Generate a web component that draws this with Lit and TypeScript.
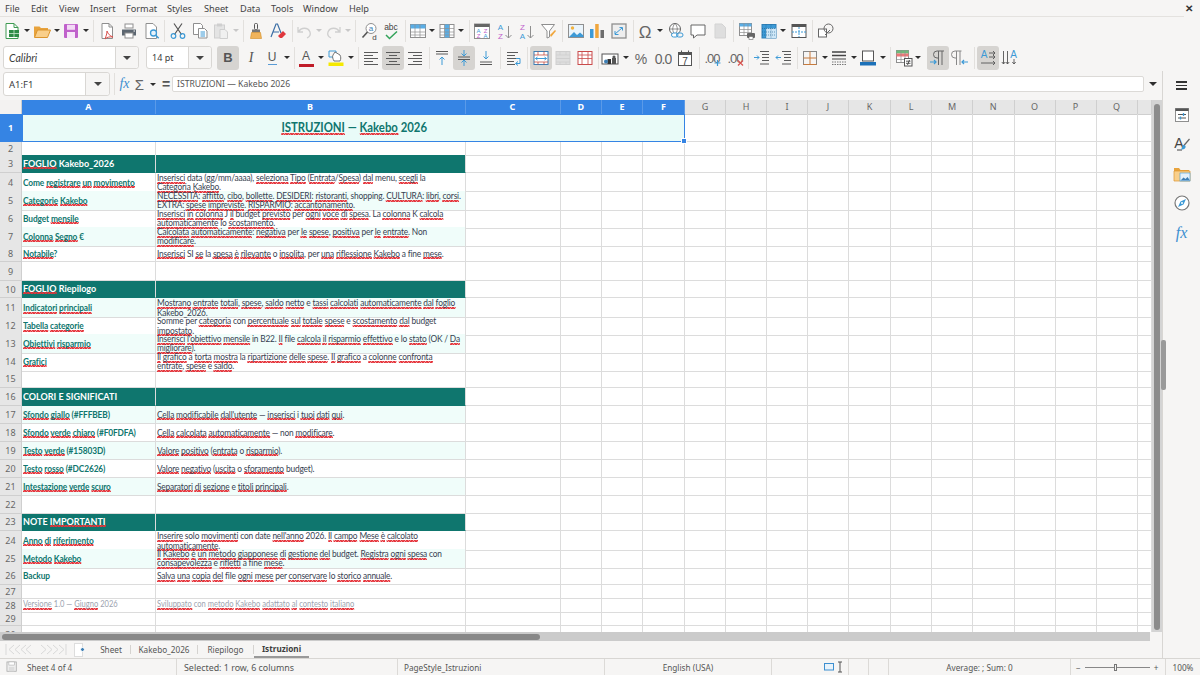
import { LitElement, html, svg, css } from "lit";
import { customElement } from "lit/decorators.js";

const B = "#5a5a5a", BL = "#3d9ad6", G = "#8f8f8f", LG = "#cfcfcf";

const ic: Record<string, any> = {
  new: svg`<path d="M3 1.5h8l4 4v11H3z" fill="#fff" stroke="#3e9a52"/><path d="M11 1.5v4h4" fill="none" stroke="#3e9a52"/><rect x="6" y="8" width="10" height="7" fill="#2e8b47"/><path d="M6 11.5h10M11 8v7" stroke="#c9e8cf" stroke-width=".8"/>`,
  open: svg`<path d="M1 4.5V15h2L5 8h10V6H8L6.5 4.5z" fill="#e8a33d"/><path d="M1.5 15.5 4.5 8H17.5l-3 7.5z" fill="#f9cf8b" stroke="#dc952e"/>`,
  save: svg`<rect x="2" y="2" width="14" height="14" rx="1" fill="#c061cb"/><rect x="5" y="2.800" width="8" height="5" fill="#f2daf5"/><rect x="5" y="10" width="8" height="6" fill="#f7e6f9"/>`,
  pdf: svg`<path d="M4 1.5h7l3.5 3.5v11.500H4z" fill="#fff" stroke=${G}/><path d="M11 1.5V5h3.5" fill="none" stroke=${G}/><path d="M9 9c1 3 3 5 6 6-3-.5-6 0-8 2 1-3 2-5 2-8z" fill="none" stroke="#d9534f"/>`,
  print: svg`<rect x="5" y="2" width="8" height="4" fill="#fff" stroke=${G}/><path d="M2 7.500h14v6H2z" fill="#5c6670"/><rect x="5" y="11" width="8" height="5" fill="#fff" stroke=${G}/><path d="M13.500 9h1.500" stroke="#fff"/>`,
  preview: svg`<path d="M3 1.500h7l3.500 3.500v11.500H3z" fill="#fff" stroke=${G}/><circle cx="10.500" cy="11" r="3" fill="#e8f3fb" stroke=${BL} stroke-width="1.300"/><path d="m12.700 13.200 3 3" stroke=${BL} stroke-width="1.500"/>`,
  cut: svg`<path d="M5 1.500l7.500 11M13 1.500 5.500 12.500" stroke="#555" stroke-width="1.200" fill="none"/><circle cx="4.500" cy="14" r="2.300" fill="none" stroke=${BL} stroke-width="1.200"/><circle cx="13.500" cy="14" r="2.300" fill="none" stroke=${BL} stroke-width="1.200"/>`,
  copy: svg`<path d="M2.500 1.500h7l2 2v9h-9z" fill="#fff" stroke=${G}/><path d="M7.500 6.500h6l2.500 2.500v7H7.500z" fill="#fff" stroke=${G}/><path d="M9.500 10h4.500M9.500 12h4.500M9.500 14h4.500" stroke=${BL}/>`,
  paste: svg`<rect x="2.500" y="3" width="10" height="13" fill="#e4e4e4" stroke=${LG}/><rect x="5" y="1.500" width="5" height="3" fill=${LG}/><path d="M8 7.500h5l2.500 2.500v6.500H8z" fill="#f0f0f0" stroke=${LG}/>`,
  clone: svg`<rect x="7.500" y="1.500" width="3" height="6" rx="1" fill="none" stroke="#555"/><path d="M5 7.500h8v3H5z" fill="#777"/><path d="M4.500 10.500h9l1 6h-11z" fill="#f0b45c" stroke="#d18b22" stroke-width=".6"/>`,
  clear: svg`<path d="M2 15 7 2h1.500L12 11M4 10h6" fill="none" stroke="#3b6ea5" stroke-width="1.200"/><path d="m9 14 5-5 3 3-4 4h-2z" fill="#e0383e"/>`,
  undo: svg`<path d="M3 5v5h5M3.500 10C6 5 13 5 15 10c1 3-1 5-3 6" fill="none" stroke=${LG} stroke-width="1.300"/>`,
  redo: svg`<path d="M15 5v5h-5M14.500 10C12 5 5 5 3 10c-1 3 1 5 3 6" fill="none" stroke=${LG} stroke-width="1.300"/>`,
  find: svg`<circle cx="10" cy="6.500" r="5" fill="#fff" stroke=${G}/><path d="M6.500 10 1.500 15.500" stroke="#555" stroke-width="1.600"/><text x="10" y="9" class="t" font-size="8" text-anchor="middle" fill="#3d7fb5">a</text><text x="13.500" y="17.500" class="t" font-size="8" text-anchor="middle" fill="#444">d</text>`,
  spell: svg`<text x="9" y="8" class="t" font-size="8.500" text-anchor="middle" fill="#444">abc</text><path d="m4 13 3.500 3.500L15 9.500" fill="none" stroke="#33a35a" stroke-width="1.500"/>`,
  rows: svg`<rect x="1.500" y="2.500" width="15" height="13" fill="#fff" stroke=${G}/><rect x="1.500" y="2.500" width="15" height="4" fill="#5aaee6"/><path d="M1.500 10h15M1.500 13h15M6 2.500v13M11 2.500v13" stroke=${G} stroke-width=".7"/>`,
  cols: svg`<rect x="2" y="2.500" width="14" height="13" fill="#fff" stroke=${G}/><rect x="6.500" y="2.500" width="5" height="13" fill="#5aaee6"/><path d="M2 6.500h14M2 10h14M2 13h14M6.500 2.500v13M11.500 2.500v13" stroke=${G} stroke-width=".7"/>`,
  sortbox: svg`<rect x="1.500" y="2" width="15" height="14.500" fill="#fff" stroke=${G}/><rect x="1.500" y="2" width="15" height="3" fill="#666"/><text x="5.500" y="10.500" class="t" font-size="6" text-anchor="middle" fill=${BL}>A</text><text x="5.500" y="16" class="t" font-size="6" text-anchor="middle" fill="#c061cb">Z</text><text x="12.500" y="10.500" class="t" font-size="6" text-anchor="middle" fill="#c061cb">Z</text><text x="12.500" y="16" class="t" font-size="6" text-anchor="middle" fill=${BL}>A</text>`,
  asc: svg`<text x="4.500" y="8" class="t" font-size="8" text-anchor="middle" fill=${BL}>A</text><text x="4.500" y="16.500" class="t" font-size="8" text-anchor="middle" fill="#c061cb">Z</text><path d="M12.500 4v12M9.500 13l3 3 3-3" fill="none" stroke=${G}/>`,
  desc: svg`<text x="4.500" y="8" class="t" font-size="8" text-anchor="middle" fill="#c061cb">Z</text><text x="4.500" y="16.500" class="t" font-size="8" text-anchor="middle" fill=${BL}>A</text><path d="M12.500 4v12M9.500 13l3 3 3-3" fill="none" stroke=${G}/>`,
  filter: svg`<path d="M1.500 2.500h13L9.500 9v6L7 16V9z" fill="#fff" stroke=${G}/><path d="M11 15l5-6-1-1-5 5z" fill="#f0a63c"/>`,
  image: svg`<rect x="1.500" y="2.500" width="15" height="13" fill="#eaf4fb" stroke=${G}/><circle cx="5.500" cy="6" r="1.700" fill="#f2b23e"/><path d="M2 15l5-5 3 3 3-2.500 3.500 3V15z" fill="#3d9ad6"/>`,
  chart: svg`<rect x="2" y="7" width="3.500" height="9" fill="#3d9ad6"/><rect x="7.200" y="2" width="3.500" height="14" fill="#f0a63c"/><rect x="12.500" y="8" width="3.500" height="8" fill="#6d6d6d"/>`,
  pivot: svg`<rect x="2" y="2" width="14" height="14" fill="#eee" stroke=${G} stroke-width="1.300"/><path d="M5 12 12 6M9.500 5.500H12.500V8.500M5 9v3.500h3.500" fill="none" stroke=${BL}/>`,
  omega: svg`<text x="9" y="15.500" class="t" font-size="17" text-anchor="middle" fill="#666">Ω</text>`,
  link: svg`<circle cx="8" cy="7" r="5.500" fill="#fff" stroke="#666"/><path d="M2.500 7h11M8 1.500c-3 3-3 8 0 11 3-3 3-8 0-11" fill="none" stroke="#666" stroke-width=".7"/><rect x="4.500" y="11" width="6.500" height="4" rx="2" fill="#fff" stroke=${BL}/><rect x="9.500" y="11" width="6.500" height="4" rx="2" fill="none" stroke=${BL}/>`,
  comment: svg`<path d="M2 3h14v10H8l-3.500 3v-3H2z" fill="#fff" stroke="#666"/>`,
  header: svg`<path d="M4 2h7l3.500 3.500V16H4z" fill="#dedede" stroke="#d3d3d3"/>`,
  printarea: svg`<rect x="1.500" y="1.500" width="12" height="12" fill="#fff" stroke=${G}/><rect x="1.500" y="1.500" width="12" height="3" fill="#5aaee6"/><path d="M1.500 7.500h12M1.500 10.500h12M6 1.500v12M10 1.500v12" stroke=${G} stroke-width=".7"/><rect x="9" y="11" width="8" height="5" rx="1" fill="#666"/><rect x="11" y="14.500" width="4" height="3" fill="#fff" stroke="#666" stroke-width=".6"/>`,
  freeze: svg`<rect x="2" y="2.500" width="14" height="13.500" fill="#3d9ad6" stroke="#2f7fb5"/><rect x="6" y="6.500" width="10" height="9.500" fill="#cfe7f7"/><path d="M2 6.500h14M2 10h14M2 13h14M6 2.500V16M11 2.500V16" stroke="#1d5f8f" stroke-width=".6" stroke-dasharray="1 1"/>`,
  split: svg`<rect x="2" y="2.500" width="14" height="13" fill="#fff" stroke="#555"/><rect x="2" y="2.500" width="14" height="2.500" fill="#555"/><path d="M2 10h14M9 5v10" stroke=${BL} stroke-dasharray="2 1"/>`,
  shapes: svg`<rect x="1.500" y="7" width="8" height="8" fill="#fff" stroke="#666"/><circle cx="11.500" cy="6.500" r="4.500" fill="none" stroke="#666"/><path d="M8 13l5-5" stroke="#666"/>`,
  left: svg`<path d="M2 3.500h14M2 6.500h9M2 9.500h14M2 12.500h9M2 15.500h14" stroke=${B} fill="none"/>`,
  center: svg`<path d="M2 3.500h14M5 6.500h8M2 9.500h14M5 12.500h8M2 15.500h14" stroke=${B} fill="none"/>`,
  right: svg`<path d="M2 3.500h14M7 6.500h9M2 9.500h14M7 12.500h9M2 15.500h14" stroke=${B} fill="none"/>`,
  top: svg`<path d="M3 2.500h12M3 5h12" stroke=${B}/><path d="M9 16V8M6.500 10.500 9 8l2.500 2.500" fill="none" stroke=${BL}/>`,
  vcenter: svg`<path d="M3 8h12M3 10.500h12" stroke=${B}/><path d="M9 1v5.500M6.500 4.500 9 7l2.500-2.500M9 17v-5.500M6.500 13.500 9 11l2.500 2.500" fill="none" stroke=${BL}/>`,
  bottom: svg`<path d="M3 13h12M3 15.500h12" stroke=${B}/><path d="M9 2v8M6.500 7.500 9 10l2.500-2.500" fill="none" stroke=${BL}/>`,
  wrap: svg`<path d="M2 3.500h11M2 6.500h8M2 9.500h9M2 12.500h7M2 15.500h8" stroke=${B}/><path d="M11 9.500h4v5h-4M13 12.500l-2.500 2 2.500 2" fill="none" stroke=${BL}/>`,
  merge: svg`<rect x="2" y="2.500" width="14" height="13" fill="#fff" stroke="#3d7fb5"/><path d="M2 6h14M2 13h14M6 2.500V6M12 2.500V6M6 13v2.500M12 13v2.500" stroke="#c0392b" stroke-width=".7"/><path d="M3.500 9.500h11M5.500 8l-2 1.500 2 1.500M12.500 8l2 1.500-2 1.500" fill="none" stroke=${BL}/>`,
  merge2: svg`<rect x="2" y="2.500" width="14" height="13" fill="#dedede" stroke=${LG}/><path d="M2 6h14M2 13h14M6 2.500V6M12 2.500V6M6 13v2.500M12 13v2.500" stroke=${LG} stroke-width=".7"/><path d="M2 9.500h14" stroke=${LG}/>`,
  merge3: svg`<rect x="2" y="2.500" width="14" height="13" fill="#fff" stroke="#c94b4b"/><path d="M2 6h14M2 9.500h14M6 2.500V15.500M12 2.500V15.500" stroke="#c94b4b" stroke-width=".8"/>`,
  currency: svg`<rect x="1" y="5" width="16" height="10" fill="#fff" stroke="#555"/><rect x="6.500" y="10" width="3.500" height="5" fill="#333"/><rect x="11" y="9" width="4" height="6" fill="#555"/><circle cx="13" cy="8" r="1.600" fill="#555"/><circle cx="5" cy="12.500" r="2" fill="#3d7fb5"/>`,
  percent: svg`<text x="9" y="15" class="t" font-size="14" text-anchor="middle" fill="#666">%</text>`,
  zero: svg`<text x="9" y="15" class="t" font-size="14" text-anchor="middle" fill="#666" letter-spacing="-1">0.0</text>`,
  date: svg`<rect x="2.500" y="3.500" width="13" height="13" fill="#fff" stroke="#555"/><path d="M2.500 3.500h13v2h-13zM5.500 1.500v3M12.500 1.500v3" fill="#555" stroke="#555"/><text x="9" y="15.500" class="t" font-size="10" text-anchor="middle" fill="#444">7</text>`,
  addec: svg`<text x="9" y="14" class="t" font-size="13" text-anchor="middle" fill="#666" letter-spacing="-1">.00</text><path d="M14.500 11v6M11.500 14h6" stroke=${BL} stroke-width="1.200"/>`,
  deldec: svg`<text x="9" y="14" class="t" font-size="13" text-anchor="middle" fill="#666" letter-spacing="-1">.00</text><path d="m12 11.500 5 5m0-5-5 5" stroke="#d9534f" stroke-width="1.200"/>`,
  indent: svg`<path d="M7 2.500h9M9 5.500h7M9 8.500h7M9 11.500h7M7 15h9" stroke=${B}/><path d="M1 8.500h5M4 6.500l2 2-2 2" fill="none" stroke=${BL}/>`,
  outdent: svg`<path d="M7 2.500h9M9 5.500h7M9 8.500h7M9 11.500h7M7 15h9" stroke=${B}/><path d="M1 8.500h5M3 6.500l-2 2 2 2" fill="none" stroke=${BL}/>`,
  borders: svg`<rect x="2.500" y="2.500" width="13" height="13" fill="none" stroke="#888"/><path d="M9 2.500v13M2.500 9h13" stroke="#c77a3c"/><path d="M2.500 15.500h13" stroke="#c77a3c"/>`,
  linestyle: svg`<path d="M2 3h14M2 6.500h14" stroke="#444" stroke-width="1.500"/><path d="M2 10h14" stroke="#444" stroke-width="1"/><path d="M2 13h14M2 15.500h14" stroke="#777" stroke-dasharray="1.500 1"/>`,
  bordercolor: svg`<rect x="3.500" y="2" width="11" height="10" fill="#fff" stroke="#555"/><rect x="1" y="13" width="16" height="3.500" fill="#1c71b8"/>`,
  cond: svg`<rect x="1.500" y="1.500" width="12" height="12" fill="#fff" stroke=${G}/><rect x="1.500" y="1.500" width="12" height="3" fill="#6dbb7a"/><rect x="1.500" y="4.500" width="12" height="3" fill="#e77"/><path d="M1.500 10.500h12M6 1.500v12M10 1.500v12" stroke=${G} stroke-width=".7"/><rect x="9.500" y="9.500" width="7.500" height="7.500" fill="#fff" stroke="#555"/><path d="M11 12.200h4.500M11 14.300h4.500M14.500 11l-2 5" stroke="#333" stroke-width=".8"/>`,
  ltr: svg`<path d="M9.500 2v14M13 2v14M15 2H8a3.500 3.500 0 0 0 0 7h1.500" fill="none" stroke="#666"/><path d="M1 13h6M5 11l2 2-2 2" fill="none" stroke=${BL} stroke-width="1.200"/>`,
  rtl: svg`<path d="M5.500 2v14M9 2v14M10.500 2H4a3.500 3.500 0 0 0 0 7h1.500" fill="none" stroke="#888"/><path d="M11 13h6M13 11l-2 2 2 2" fill="none" stroke=${BL} stroke-width="1.200"/>`,
  horiz: svg`<text x="5" y="9" class="t" font-size="10" text-anchor="middle" fill=${BL}>A</text><path d="M10 4h6M14 2l2 2-2 2M10 8h6M14 6l2 2-2 2M2 14h14M14 12l2 2-2 2" fill="none" stroke="#555" stroke-width=".9"/>`,
  vert: svg`<text x="12.500" y="9" class="t" font-size="10" text-anchor="middle" fill=${BL}>A</text><path d="M2.500 2v13M.8 13l1.700 2 1.700-2M6.500 2v13M4.800 13l1.700 2 1.700-2M13 10v5M11.300 13l1.700 2 1.700-2" fill="none" stroke="#555" stroke-width=".9"/>`,
  props: svg`<rect x="2.500" y="2.500" width="13" height="13" fill="#fff" stroke=${G}/><rect x="2.500" y="2.500" width="13" height="2.500" fill="#555"/><path d="M5 8.500h8M5 12h8" stroke="#555"/><path d="M10.500 7v3M7.500 10.500v3" stroke=${BL} stroke-width="1.300"/>`,
  styles: svg`<text x="6" y="13" class="t" font-size="14" text-anchor="middle" fill="#444">A</text><path d="M4 15h5" stroke="#444"/><path d="M16.500 4 10.500 11" stroke="#666" stroke-width="1.200"/><path d="M11 10c1 0 2 1 1.500 2.500-1 2-3 2-4.500 2 1-1 1-4.500 3-4.500z" fill=${BL}/>`,
  gallery: svg`<path d="M1 3h5l1.500 2H16v3H1z" fill="#e8a33d"/><path d="M1 6h16v10H1z" fill="#f9cf8b" stroke="#dc952e" stroke-width=".7"/><rect x="7" y="8" width="10" height="8" fill="#e4f0f9" stroke=${BL} stroke-width=".6"/><path d="M7.500 15.500l3-3 2 1.500 2-2 2.500 3.500z" fill="#3d7fb5"/>`,
  nav: svg`<circle cx="9" cy="9" r="7" fill="#fff" stroke="#777" stroke-width="1.200"/><path d="M13 5 10.500 10.500 5 13l2.500-5.500z" fill=${BL}/><circle cx="9" cy="9" r="1" fill="#fff"/>`,
  savedoc: svg`<rect x="2.500" y="2.500" width="12" height="12" fill="#eee" stroke="#aaa"/><rect x="5" y="2.500" width="7" height="4" fill="#fff" stroke="#aaa" stroke-width=".7"/><rect x="5" y="9" width="7" height="5.500" fill="#ddd"/>`,
};

const ICON = (n: string, size = 18) => html`<svg class="i" width=${size} height=${size} viewBox="0 0 18 18">${ic[n]}</svg>`;

type T = [string, number, number?];
const tb1: T[] = [["new",12],["arrow",27],["open",42],["arrow",57],["save",71],["arrow",86],["sep",93],["pdf",107],["print",129],["preview",152],["sep",164],["cut",178],["copy",200],["paste",221],["arrowd",236],["sep",243],["clone",256],["clear",278],["sep",292],["undo",304],["arrowd",319],["redo",334],["arrowd",348],["sep",355],["find",370],["spell",391],["sep",405],["rows",418],["arrow",432],["cols",447],["arrow",461],["sep",469],["sortbox",482],["asc",505],["desc",527],["filter",549],["sep",562],["image",576],["chart",597],["pivot",619],["sep",633],["omega",645],["arrow",660],["link",676],["comment",698],["header",720],["sep",733],["printarea",747],["freeze",769],["arrow",783],["split",799],["sep",812],["shapes",826]];
const tb2: T[] = [["bold",228,1],["italic",251],["under",272],["arrow",287],["sep",294],["fontcolor",306],["arrow",321],["hilite",336],["arrow",351],["sep",358],["left",371],["center",393,1],["right",415],["sep",429],["top",442],["vcenter",464,1],["bottom",486],["sep",500],["wrap",514],["sep",527],["merge",541,1],["merge2",563],["merge3",585],["sep",598],["currency",610],["arrow",626],["percent",641],["zero",663],["date",685],["sep",699],["addec",712],["deldec",735],["sep",748],["indent",762],["outdent",784],["sep",797],["borders",810],["arrow",825],["linestyle",839],["arrow",854],["bordercolor",868],["arrow",883],["sep",890],["cond",904],["arrow",918],["sep",927],["ltr",938,1],["rtl",960],["sep",974],["horiz",988,1],["vert",1010]];

const W = (n: string) => (n === "sep" ? 1 : n.startsWith("arrow") ? 8 : 22);

const colLetters = "A B C D E F G H I J K L M N O P Q".split(" ").concat([""]);
const bottoms = [142,155.3,173,191.2,209.2,227.2,245,262.5,280.7,298.4,316.4,334.3,352.3,370.3,388.3,406,424,442,460,477.7,495.7,513.7,531.4,549.3,567.3,585,598.7,612.3,626.3,644];

type Row = { a?: string; b?: string; kind?: "head" | "tint" | "foot" };
const R: Record<number, Row> = {
  3: { a: "[FOGLIO] Kakebo_2026", kind: "head" },
  4: { a: "Come [registrare] [un] [movimento]", b: "[Inserisci] data (gg/mm/aaaa), [seleziona] [Tipo] ([Entrata]/[Spesa]) [dal] menu, [scegli] la|[Categoria] [Kakebo]." },
  5: { a: "[Categorie] [Kakebo]", kind: "tint", b: "[NECESSITÀ]: [affitto], [cibo], [bollette]. [DESIDERI]: [ristoranti], shopping. [CULTURA]: [libri], [corsi].|EXTRA: [spese] [impreviste]. [RISPARMIO]: [accantonamento]." },
  6: { a: "Budget [mensile]", b: "[Inserisci] [in] [colonna] J [il] budget [previsto] per [ogni] [voce] [di] [spesa]. La [colonna] K [calcola]|[automaticamente] lo [scostamento]." },
  7: { a: "[Colonna] [Segno] €", kind: "tint", b: "[Calcolata] [automaticamente]: [negativa] per [le] [spese], [positiva] per [le] [entrate]. Non|[modificare]." },
  8: { a: "[Notabile]?", b: "[Inserisci] SI [se] la [spesa] [è] [rilevante] o [insolita], per [una] [riflessione] [Kakebo] a fine [mese]." },
  10: { a: "[FOGLIO] Riepilogo", kind: "head" },
  11: { a: "[Indicatori] [principali]", kind: "tint", b: "[Mostrano] [entrate] [totali], [spese], [saldo] [netto] e [tassi] [calcolati] [automaticamente] [dal] [foglio]|Kakebo_2026." },
  12: { a: "[Tabella] [categorie]", b: "Somme per [categoria] con [percentuale] [sul] [totale] [spese] e [scostamento] [dal] budget|[impostato]." },
  13: { a: "[Obiettivi] [risparmio]", kind: "tint", b: "[Inserisci] [l'obiettivo] [mensile] in B22. [Il] file [calcola] [il] [risparmio] [effettivo] e lo [stato] (OK / [Da]|[migliorare])." },
  14: { a: "[Grafici]", b: "[Il] [grafico] a [torta] [mostra] la [ripartizione] [delle] [spese]. [Il] [grafico] a [colonne] [confronta]|[entrate], [spese] e [saldo]." },
  16: { a: "COLORI E SIGNIFICATI", kind: "head" },
  17: { a: "[Sfondo] [giallo] (#FFFBEB)", kind: "tint", b: "[Cella] [modificabile] [dall'utente] — [inserisci] i [tuoi] [dati] [qui]." },
  18: { a: "[Sfondo] [verde] [chiaro] (#F0FDFA)", b: "[Cella] [calcolata] [automaticamente] — non [modificare]." },
  19: { a: "[Testo] [verde] (#15803D)", kind: "tint", b: "[Valore] [positivo] ([entrata] o [risparmio])." },
  20: { a: "[Testo] [rosso] (#DC2626)", b: "[Valore] [negativo] ([uscita] o [sforamento] budget)." },
  21: { a: "[Intestazione] [verde] [scuro]", kind: "tint", b: "[Separatori] [di] [sezione] e [titoli] [principali]." },
  23: { a: "NOTE [IMPORTANTI]", kind: "head" },
  24: { a: "[Anno] [di] [riferimento]", b: "[Inserire] solo [movimenti] con date [nell'anno] 2026. [Il] [campo] [Mese] [è] [calcolato]|[automaticamente]." },
  25: { a: "[Metodo] [Kakebo]", kind: "tint", b: "[Il] [Kakebo] [è] [un] [metodo] [giapponese] [di] [gestione] [del] budget. [Registra] [ogni] [spesa] con|[consapevolezza] e [rifletti] a fine [mese]." },
  26: { a: "Backup", b: "[Salva] [una] [copia] [del] file [ogni] [mese] per [conservare] lo [storico] [annuale]." },
  28: { a: "[Versione] 1.0 — [Giugno] 2026", kind: "foot", b: "[Sviluppato] con [metodo] [Kakebo] [adattato] [al] [contesto] [italiano]" },
};

const rich = (s?: string) => {
  if (!s) return "";
  return s.split("|").map((line) => html`<div class="ln">${line.split(/(\[[^\]]+\])/).map((p) => p.startsWith("[") ? html`<span class="sq">${p.slice(1, -1)}</span>` : p)}</div>`);
};

@customElement("app-root")
export class AppRoot extends LitElement {
  static styles = css`
    :host { display: flex; flex-direction: column; width: 1200px; height: 675px; background: #f6f5f4; overflow: hidden; font-family: "Noto Sans", sans-serif; font-size: 9px; color: #3d3d3d; }
    svg.i { display: block; flex: none; }
    svg .t { font-family: "Liberation Sans", sans-serif; }
    .menu { height: 16px; flex: none; border-bottom: 1px solid #e4e2df; margin-right: 16px; position: relative; font-size: 9.2px; color: #444; }
    .menu span { position: absolute; top: 1px; line-height: 15px; }
    .close { position: absolute; left: 1185px; top: 1px; font-size: 10px; line-height: 15px; font-weight: 700; color: #333; }
    .tb { height: 27px; flex: none; display: flex; align-items: center; }
    .item { height: 24px; display: flex; align-items: center; justify-content: center; flex: none; border-radius: 3px; }
    .item.active { background: #d6d4d1; }
    .sep { width: 1px; height: 22px; background: #e2e0dd; flex: none; }
    .arr { width: 0; height: 0; border-left: 3px solid transparent; border-right: 3px solid transparent; border-top: 3px solid #2e2e2e; }
    .arr.dim { border-top-color: #c8c8c8; }
    .combo { display: flex; height: 23px; background: #fff; border: 1px solid #d9d7d4; border-radius: 3px; flex: none; box-sizing: border-box; align-items: stretch; }
    .combo .val { flex: 1; display: flex; align-items: center; padding-left: 5px; }
    .combo .drop { background: #f6f5f4; border-left: 1px solid #d9d7d4; display: flex; align-items: center; justify-content: center; border-radius: 0 3px 3px 0; }
    .combo .big { border-left-width: 4px; border-right-width: 4px; border-top-width: 4px; border-top-color: #444; }
    .fn { width: 136px; margin-left: 3px; }
    .fn .val { font: italic 10.5px "Lato", sans-serif; }
    .fn .drop { width: 22px; }
    .fs { width: 66px; margin-left: 7px; }
    .fs .drop { width: 22px; }
    .letter { font: 12px "Liberation Sans", sans-serif; color: #555; }
    .letter.b { font-weight: 700; font-size: 13px; }
    .letter.it { font-family: "Liberation Serif", serif; font-style: italic; font-size: 14px; }
    .stack { display: flex; flex-direction: column; align-items: center; line-height: 12px; }
    .bar-u { width: 9px; height: 1px; background: #5a9bd5; }
    .bar-r { width: 15px; height: 3px; background: #c01c28; margin-top: 1px; }
    .body { flex: 1; display: flex; min-height: 0; }
    .left { flex: 1; min-width: 0; display: flex; flex-direction: column; }
    .formula { height: 29px; flex: none; display: flex; align-items: center; padding-bottom: 3px; box-sizing: border-box; }
    .nb { width: 107px; margin-left: 3px; height: 24px; }
    .nb .val { font-size: 9.5px; }
    .nb .drop { width: 23px; }
    .fxsep { width: 1px; height: 22px; background: #e2e0dd; margin-left: 4px; }
    .fxb { display: flex; width: 57px; align-items: center; height: 22px; color: #555; box-sizing: border-box; }
    .fxt { font: italic 14px "Liberation Serif", serif; color: #3d8fd0; width: 17px; text-align: center; margin-left: 1px; }
    .sig { font: 15px "Liberation Sans", sans-serif; color: #666; width: 13px; text-align: center; }
    .eq { font: 700 14px "Liberation Sans", sans-serif; color: #555; width: 10px; text-align: center; margin-left: 3px; }
    .mini { width: 10px; margin-left: 2px; }
    .inp { width: 972px; height: 16px; background: #fff; border: 1px solid #dcdad7; box-sizing: border-box; font-size: 8.6px; line-height: 14px; padding-left: 4px; border-radius: 2px; color: #555; }
    .inpdrop { flex: 1; display: flex; justify-content: center; }
    .inpdrop .arr { border-left-width: 4px; border-right-width: 4px; border-top-width: 4px; }
    .gridwrap { flex: 1; min-height: 0; display: flex; }
    .grid { width: 1152px; flex: none; overflow: hidden; position: relative; background: #fff; }
    .r { display: grid; grid-template-columns: 22px 133.5px 310px 95px 41.5px 41px 42px 41px 41px 41px 41px 42px 41px 41px 41.5px 41px 41px 41px 14.5px; }
    .colh { height: 14px; background: #e6e6e6; }
    .colh > div { border-right: 1px solid #cfcfcf; text-align: center; line-height: 14px; font-size: 9px; color: #666; box-sizing: border-box; border-bottom: 1px solid #cfcfcf; }
    .colh > .sel { background: #3584e4; color: #fff; font-weight: 700; border-color: #5a9ae8; }
    .colh > .corner { background: #f3f2f1; }
    .c { border-right: 1px solid #dcdcdc; border-bottom: 1px solid #dcdcdc; box-sizing: border-box; display: flex; flex-direction: column; justify-content: center; align-items: flex-start; padding-left: 1px; white-space: nowrap; font-family: "Lato", sans-serif; min-width: 0; }
    .rh { background: #e6e6e6; border-right: 1px solid #cfcfcf; border-bottom: 1px solid #cfcfcf; box-sizing: border-box; display: flex; align-items: center; justify-content: center; font-size: 9px; color: #666; }
    .rh.sel { background: #3584e4; color: #fff; font-weight: 700; border-color: #3584e4; }
    .ln { line-height: 9.2px; transform: scaleX(var(--sx, 1)); transform-origin: 0 50%; flex: none; }
    .sq {
      padding-bottom: 1px;
      background-image: linear-gradient(135deg, transparent 30%, #e5333a 30%, #e5333a 70%, transparent 70%), linear-gradient(45deg, transparent 30%, #e5333a 30%, #e5333a 70%, transparent 70%);
      background-size: 3px 2px, 3px 2px;
      background-position: 0 1em, 1.5px 1em;
      background-repeat: repeat-x;
    }
    .ca { color: #0f766e; font-weight: 700; font-size: 9.6px; letter-spacing: -0.12px; --sx: .868; }
    .cb { color: #374151; font-size: 9.6px; letter-spacing: -0.2px; --sx: .87; }
    .head { background: #0f766e; border-color: #0f766e; color: #fff; font-weight: 700; font-size: 9.7px; border-right-color: #dcdcdc; --sx: .93; letter-spacing: 0; }
    .tint { background: #f0fdfa; }
    .foot { color: #9ca3af; font-weight: 400; font-size: 8.6px; --sx: .88; letter-spacing: 0; }
    .title { grid-column: span 6; background: #e9fbf8; color: #0f766e; font-weight: 700; font-size: 13.6px; align-items: center; border: 1px solid #3584e4; position: relative; --sx: .835; }
    .title .ln { transform-origin: 50% 50%; line-height: 16px; margin-bottom: 2px; }
    .handle { position: absolute; right: -3px; bottom: -3px; width: 4px; height: 4px; background: #3584e4; border: 1px solid #fff; }
    .vs { flex: 1; background: #d4d4d4; display: flex; justify-content: center; padding: 4px 0 2px; }
    .vs div { width: 6px; background: #8c8c8c; border-radius: 3px; }
    .hs { height: 9px; flex: none; background: #cbcbcb; display: flex; align-items: center; padding-left: 2px; margin-right: 12px; }
    .hs div { width: 538px; height: 6px; background: #888; border-radius: 3px; }
    .tabs { height: 17px; flex: none; display: flex; align-items: center; font-size: 8.2px; }
    .tabnav { width: 62px; margin-left: 5px; }
    .addtab { width: 9px; height: 14px; background: #fff; border: 1px solid #ddd; margin-left: 7px; position: relative; box-sizing: border-box; }
    .gear { position: absolute; left: 5px; top: 3px; width: 3px; height: 3px; border-radius: 50%; background: #3d7fb5; border: 1px solid #fff; }
    .tab { display: flex; align-items: center; justify-content: center; height: 17px; box-sizing: border-box; white-space: nowrap; color: #555; flex: none; }
    .tab.on { font-weight: 700; color: #3d3d3d; border-bottom: 2px solid #999; }
    .tsep { width: 1px; height: 9px; background: #d5d3d0; flex: none; }
    .t1 { width: 38px; margin-left: 9px; } .t2 { width: 66px; } .t3 { width: 55px; } .t4 { width: 55px; }
    .side { width: 38px; flex: none; border-left: 1px solid #d8d6d3; box-sizing: border-box; display: flex; flex-direction: column; align-items: center; position: relative; }
    .sbtn { height: 29.4px; display: flex; align-items: center; justify-content: center; width: 100%; flex: none; }
    .sfx { font: italic 16px "Liberation Serif", serif; color: #3d8fd0; }
    .ham { width: 11px; display: flex; flex-direction: column; gap: 2px; }
    .ham div { height: 1.5px; background: #333; }
    .grip { position: absolute; left: -2px; top: 269px; width: 5px; height: 50px; background: #9a9a9a; border-radius: 2px; }
    .status { height: 17px; flex: none; border-top: 1px solid #d8d6d3; box-sizing: border-box; display: flex; align-items: center; font-size: 8.2px; color: #555; white-space: nowrap; }
    .st { box-sizing: border-box; height: 100%; display: flex; align-items: center; border-right: 1px solid #dcdad7; flex: none; }
    .st0 { width: 177px; } .st0 svg { margin-left: 5px; } .st0 span { margin-left: 8px; }
    .st1 { width: 221px; padding-left: 7px; font-size: 8.9px; }
    .st2 { width: 207px; padding-left: 6px; }
    .st3 { width: 167px; justify-content: center; }
    .st4 { width: 77px; padding-left: 52px; }
    .st5 { width: 20px; }
    .st6 { width: 182px; justify-content: center; }
    .st7 { width: 95px; padding-left: 5px; }
    .st8 { flex: 1; justify-content: center; border: 0; }
    .slider { width: 65px; height: 1px; background: #888; position: relative; margin: 0 4px; }
    .slider div { position: absolute; left: 29px; top: -3px; width: 3px; height: 7px; background: #f6f5f4; border: 1px solid #777; box-sizing: border-box; }
  `;

  item(t: T, prev: number) {
    const [n, cx, act] = t;
    const w = W(n);
    const ml = cx - w / 2 - prev;
    const st = `margin-left:${ml}px;width:${w}px`;
    if (n === "sep") return html`<div class="sep" style=${st}></div>`;
    if (n === "arrow" || n === "arrowd") return html`<div class="item" style=${st}><div class="arr ${n === "arrowd" ? "dim" : ""}"></div></div>`;
    let inner: any;
    if (n === "bold") inner = html`<span class="letter b">B</span>`;
    else if (n === "italic") inner = html`<span class="letter it">I</span>`;
    else if (n === "under") inner = html`<div class="stack"><span class="letter">U</span><div class="bar-u"></div></div>`;
    else if (n === "fontcolor") inner = html`<div class="stack"><span class="letter">A</span><div class="bar-r"></div></div>`;
    else if (n === "hilite") inner = html`<svg class="i" width="18" height="18" viewBox="0 0 18 18"><path d="M2 2h7v6H2z" fill="none" stroke=${BL}/><path d="M7 12c-1-2-2-4-1-6l2-3 5 3c1 2 1 4 0 6z" fill="#fff" stroke="#555" stroke-width=".8"/><rect x="1.500" y="13.500" width="15" height="3.500" fill="#f5e900"/></svg>`;
    else inner = ICON(n);
    return html`<div class="item ${act ? "active" : ""}" style=${st}>${inner}</div>`;
  }

  bar(list: T[], start: number) {
    let prev = start;
    return list.map((t) => {
      const r = this.item(t, prev);
      prev = t[1] + W(t[0]) / 2;
      return r;
    });
  }

  gridRows() {
    let top = 114;
    return bottoms.map((bot, i) => {
      const n = i + 1;
      const h = bot - top;
      top = bot;
      const st = `height:${h}px`;
      if (n === 1)
        return html`<div class="r" style=${st}><div class="rh sel">1</div><div class="c title">${rich("[ISTRUZIONI] — [Kakebo] 2026")}<div class="handle"></div></div>${colLetters.slice(6).map(() => html`<div class="c"></div>`)}</div>`;
      const row = R[n] || {};
      const k = row.kind || "";
      const rest = colLetters.slice(2).map(() => html`<div class="c"></div>`);
      return html`<div class="r" style=${st}><div class="rh">${n}</div><div class="c ca ${k}">${rich(row.a)}</div><div class="c cb ${k}">${rich(row.b)}</div>${rest}</div>`;
    });
  }

  render() {
    const menus: [string, number][] = [["File",5],["Edit",31],["View",59],["Insert",90],["Format",126],["Styles",167],["Sheet",204],["Data",240],["Tools",271],["Window",303],["Help",349]];
    return html`
      <div class="menu">${menus.map(([m, x]) => html`<span style="left:${x}px">${m}</span>`)}<div class="close">✕</div></div>
      <div class="tb">${this.bar(tb1, 0)}</div>
      <div class="tb">
        <div class="combo fn"><div class="val">Calibri</div><div class="drop"><div class="arr big"></div></div></div>
        <div class="combo fs"><div class="val">14 pt</div><div class="drop"><div class="arr big"></div></div></div>
        ${this.bar(tb2, 212)}
      </div>
      <div class="body">
        <div class="left">
          <div class="formula">
            <div class="combo nb"><div class="val">A1:F1</div><div class="drop"><div class="arr big"></div></div></div>
            <div class="fxsep"></div>
            <div class="fxb"><span class="fxt">fx</span><span class="sig">Σ</span><div class="item mini"><div class="arr"></div></div><span class="eq">=</span></div>
            <div class="inp">ISTRUZIONI — Kakebo 2026</div>
            <div class="inpdrop"><div class="arr"></div></div>
          </div>
          <div class="gridwrap">
            <div class="grid">
              <div class="r colh"><div class="corner"></div>${colLetters.map((c, i) => html`<div class=${i < 6 ? "sel" : ""}>${c}</div>`)}</div>
              ${this.gridRows()}
            </div>
            <div class="vs"><div></div></div>
          </div>
          <div class="hs"><div></div></div>
          <div class="tabs">
            <svg class="tabnav" height="13" viewBox="0 0 62 13"><g fill="none" stroke="#d9d9d9"><path d="M1 1v11M9 2 4 6.500 9 11M15 2l-5 4.500L15 11M21 2l-5 4.500L21 11M26 2l-5 4.500L26 11M36 2l5 4.500L36 11M42 2l5 4.500L42 11M48 2l5 4.500L48 11M54 2l5 4.500L54 11M61 1v11"/></g></svg>
            <div class="addtab"><div class="gear"></div></div>
            <div class="tab t1">Sheet</div><div class="tsep"></div>
            <div class="tab t2">Kakebo_2026</div><div class="tsep"></div>
            <div class="tab t3">Riepilogo</div><div class="tsep"></div>
            <div class="tab t4 on">Istruzioni</div>
          </div>
        </div>
        <div class="side">
          <div class="sbtn"><div class="ham"><div></div><div></div><div></div></div></div>
          <div class="sbtn">${ICON("props")}</div>
          <div class="sbtn">${ICON("styles")}</div>
          <div class="sbtn">${ICON("gallery")}</div>
          <div class="sbtn">${ICON("nav")}</div>
          <div class="sbtn"><span class="sfx">fx</span></div>
          <div class="grip"></div>
        </div>
      </div>
      <div class="status">
        <div class="st st0">${ICON("savedoc", 14)}<span>Sheet 4 of 4</span></div>
        <div class="st st1">Selected: 1 row, 6 columns</div>
        <div class="st st2">PageStyle_Istruzioni</div>
        <div class="st st3">English (USA)</div>
        <div class="st st4"><svg width="22" height="12" viewBox="0 0 22 12"><rect x=".5" y="2.500" width="9" height="6.500" fill="#e8f3fb" stroke="#3d8fd0"/><path d="M14 1h4M16 1v10M14 11h4" stroke="#555" fill="none"/></svg></div>
        <div class="st st5"></div>
        <div class="st st5"></div>
        <div class="st st6">Average: ; Sum: 0</div>
        <div class="st st7"><span>−</span><div class="slider"><div></div></div><span>+</span></div>
        <div class="st st8">100%</div>
      </div>
    `;
  }
}
